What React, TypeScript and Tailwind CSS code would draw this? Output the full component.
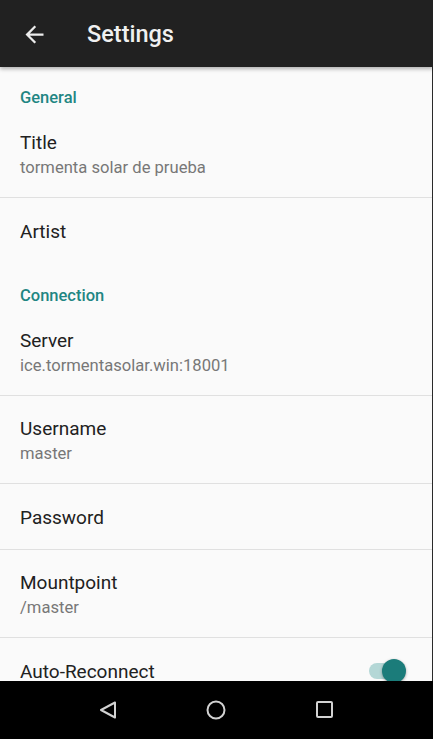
import React from 'react';

type Pref = { title: string; summary?: string; toggle?: boolean };

const sections: { header: string; pad: string; items: Pref[] }[] = [
  {
    header: 'General',
    pad: 'pt-[22px] pb-[3px]',
    items: [{ title: 'Title', summary: 'tormenta solar de prueba' }, { title: 'Artist' }],
  },
  {
    header: 'Connection',
    pad: 'pt-[24px] pb-[3px]',
    items: [
      { title: 'Server', summary: 'ice.tormentasolar.win:18001' },
      { title: 'Username', summary: 'master' },
      { title: 'Password' },
      { title: 'Mountpoint', summary: '/master' },
      { title: 'Auto-Reconnect', toggle: true },
    ],
  },
];

const Row = ({ pref, divider }: { pref: Pref; divider: boolean }) => (
  <div className={`flex items-start justify-between pl-5 pr-6 ${divider ? 'border-b border-[#e0e0e0]' : ''} ${pref.summary ? 'pt-[21px] pb-[16px]' : 'pt-[22px] pb-[19px]'}`}>
    <div className="flex flex-col">
      <span className="text-[19px] leading-[24px] text-[#212121]">{pref.title}</span>
      {pref.summary && <span className="text-[16.6px] leading-[26px] text-[#777777]">{pref.summary}</span>}
    </div>
    {pref.toggle && (
      <div className="relative -mt-[1px] h-[24px] w-[40px]">
        <div className="absolute left-[1px] top-[4px] h-[16px] w-[34px] rounded-full bg-[#b4d7d6]" />
        <div className="absolute left-[14px] top-0 h-[24px] w-[24px] rounded-full bg-[#1b7c7a] shadow-[0_1px_3px_rgba(0,0,0,0.35)]" />
      </div>
    )}
  </div>
);

export default function App() {
  return (
    <div className="flex h-[739px] w-[433px] flex-col overflow-hidden bg-[#fafafa]" style={{ fontFamily: 'Roboto, "Noto Sans", sans-serif' }}>
      <header className="relative z-10 flex h-[67px] shrink-0 items-center bg-[#212121] pt-[2px] shadow-[0_2px_4px_rgba(0,0,0,0.3)]">
        <svg viewBox="0 0 24 24" className="ml-[21px] h-[27px] w-[27px]" fill="#ececec">
          <path d="M20 11H7.83l5.59-5.59L12 4l-8 8 8 8 1.41-1.41L7.83 13H20v-2z" />
        </svg>
        <h1 className="ml-[39px] text-[23.5px] font-medium text-[#f0f0f0]">Settings</h1>
      </header>

      <main className="flex-1 overflow-hidden border-r border-[#2a2a2a]">
        {sections.map((s) => (
          <section key={s.header}>
            <div className={`${s.pad} pl-5 text-[16.5px] font-medium leading-[18px] text-[#1f8683]`}>{s.header}</div>
            {s.items.map((p, i) => (
              <Row key={p.title} pref={p} divider={i < s.items.length - 1} />
            ))}
          </section>
        ))}
      </main>

      <nav className="flex h-[58px] shrink-0 items-center bg-black">
        <svg width="433" height="58" viewBox="0 0 433 58" fill="none" stroke="#d2d2d2" strokeWidth="2">
          <path d="M115 21.5 L101 29 L115 36.5 Z" strokeLinejoin="round" />
          <circle cx="216" cy="29" r="8.5" />
          <rect x="317" y="21" width="15" height="15" rx="1" />
        </svg>
      </nav>
    </div>
  );
}
